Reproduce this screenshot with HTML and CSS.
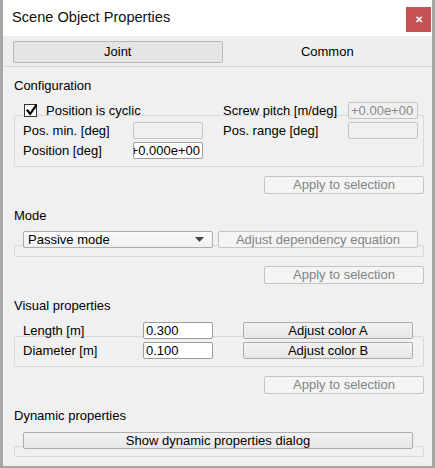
FILE: index.html
```html
<!DOCTYPE html>
<html>
<head>
<meta charset="utf-8">
<link rel="stylesheet" href="styles.css">
</head>
<body>
<div class="window">
  <div class="titlebar">
    <span class="title">Scene Object Properties</span>
    <span class="close">&#x2715;</span>
  </div>
  <div class="tabs">
    <div class="tab active">Joint</div>
    <div class="tab">Common</div>
  </div>
  <div class="content">
    <div class="sec-label first">Configuration</div>
    <div class="frame f-config">
      <div class="inner grid-config">
        <label class="check"><span class="box"><svg width="13" height="13" viewBox="0 0 13 13"><path d="M2.5 6.5 L5.2 10 L10.8 1.8" fill="none" stroke="#000" stroke-width="2.2" stroke-linecap="square"/></svg></span>Position is cyclic</label>
        <span class="lbl pad">Screw pitch [m/deg]</span>
        <span class="input dis">+0.00e+00</span>
        <span class="lbl">Pos. min. [deg]</span>
        <span class="input dis"></span>
        <span class="lbl pad">Pos. range [deg]</span>
        <span class="input dis"></span>
        <span class="lbl">Position [deg]</span>
        <span class="input en clip"><span>+0.000e+00</span></span>
      </div>
    </div>
    <div class="apply-row"><span class="btn dis apply">Apply to selection</span></div>

    <div class="sec-label">Mode</div>
    <div class="frame f-mode">
      <div class="inner row-mode">
        <span class="combo">Passive mode<svg class="arrow" width="9" height="5" viewBox="0 0 9 5"><path d="M0 0 H9 L4.5 5 Z" fill="#444"/></svg></span>
        <span class="btn dis wide">Adjust dependency equation</span>
      </div>
    </div>
    <div class="apply-row"><span class="btn dis apply">Apply to selection</span></div>

    <div class="sec-label">Visual properties</div>
    <div class="frame f-visual">
      <div class="inner grid-visual">
        <span class="lbl">Length [m]</span>
        <span class="input en">0.300</span>
        <span class="btn">Adjust color A</span>
        <span class="lbl">Diameter [m]</span>
        <span class="input en">0.100</span>
        <span class="btn">Adjust color B</span>
      </div>
    </div>
    <div class="apply-row"><span class="btn dis apply">Apply to selection</span></div>

    <div class="sec-label">Dynamic properties</div>
    <div class="frame f-dyn">
      <div class="inner row-dyn">
        <span class="btn full">Show dynamic properties dialog</span>
      </div>
    </div>
  </div>
</div>
</body>
</html>
```
FILE: styles.css
```css
* { box-sizing: border-box; }
html, body { margin: 0; padding: 0; }
body {
  width: 435px;
  height: 468px;
  overflow: hidden;
  background: #a9a7a3;
  font-family: "Liberation Sans", Arial, sans-serif;
  font-size: 13px;
  color: #000;
}
.window {
  margin-left: 3px;
  width: 429px;
  height: 466px;
  background: #f0f0f0;
}
.titlebar {
  height: 36px;
  background: #fff;
  display: flex;
  align-items: flex-start;
  justify-content: space-between;
}
.title {
  font-size: 14.6px;
  margin: 9px 0 0 9px;
  color: #111;
}
.close {
  width: 25px;
  height: 25px;
  margin: 7px 1px 0 0;
  background: #c75050;
  color: #fff;
  font-size: 10px;
  font-weight: bold;
  display: flex;
  align-items: center;
  justify-content: center;
}
.tabs {
  display: flex;
  padding: 5px 0 3px 10px;
  background: #eeeeee;
  border-bottom: 1px solid #d8d8d8;
}
.tab {
  flex: 1;
  height: 22px;
  line-height: 20px;
  text-align: center;
  border: 1px solid transparent;
}
.tab.active {
  background: #e5e5e5;
  border-color: #b9b9b9;
  border-radius: 2px;
}
.content {
  padding-left: 11px;
}
.sec-label {
  height: 16px;
  line-height: 16px;
  margin-top: 14px;
}
.sec-label.first { margin-top: 11px; }
.frame {
  width: 410px;
  border: 1px solid #d9d9d9;
  border-radius: 2px;
}
.inner { padding-left: 8px; }
.f-config { margin-top: 21px; padding-bottom: 7px; }
.f-config .inner { margin-top: -14px; }
.f-mode { margin-top: 21px; padding-bottom: 8px; }
.f-mode .inner { margin-top: -15px; }
.f-visual { margin-top: 22px; padding-bottom: 7px; }
.f-visual .inner { margin-top: -15px; }
.f-dyn { margin-top: 22px; padding-bottom: 7px; }
.f-dyn .inner { margin-top: -15px; }

.grid-config {
  display: grid;
  grid-template-columns: 110px 70px 145px 70px;
  row-gap: 3px;
}
.grid-config > .check { grid-column: 1 / span 2; }
.lbl {
  height: 17px;
  line-height: 17px;
  white-space: nowrap;
}
.lbl.pad { padding-left: 20px; }
.check {
  display: flex;
  align-items: center;
  height: 17px;
  white-space: nowrap;
}
.box {
  width: 13px;
  height: 13px;
  border: 1px solid #333;
  background: #fff;
  margin: 0 9px 0 1px;
}
.box svg { display: block; margin: -1px 0 0 0; }
.input {
  height: 17px;
  line-height: 15px;
  border: 1px solid #abadb3;
  border-radius: 2px;
  padding: 0 2px;
  white-space: nowrap;
  overflow: hidden;
}
.input.en { background: #fff; border-color: #9c9c9c; }
.input.dis { background: #f0f0f0; border-color: #c4c4c4; color: #8a8a8a; }
.input.clip { display: flex; justify-content: flex-end; padding: 0 2px 0 0; }
.btn {
  display: inline-block;
  height: 18px;
  line-height: 16px;
  text-align: center;
  border: 1px solid #acacac;
  border-radius: 2px;
  background: linear-gradient(#f2f2f2, #e6e6e6);
  white-space: nowrap;
}
.btn.dis {
  border-color: #c3c3c3;
  background: #f4f4f4;
  color: #838383;
}
.apply-row {
  width: 410px;
  display: flex;
  justify-content: flex-end;
  margin-top: 9px;
}
.apply { width: 160px; }
.row-mode {
  display: flex;
  gap: 5px;
}
.combo {
  width: 190px;
  height: 17px;
  line-height: 15px;
  border: 1px solid #acacac;
  border-radius: 2px;
  background: linear-gradient(#fbfbfb, #f0f0f0);
  padding: 0 4px;
  display: flex;
  align-items: center;
  justify-content: space-between;
}
.arrow { margin-right: 4px; }
.row-mode .wide { width: 200px; height: 17px; line-height: 15px; }
.grid-visual {
  display: grid;
  grid-template-columns: 120px 100px 170px;
  row-gap: 3px;
}
.grid-visual .btn, .grid-visual .input { height: 17px; line-height: 15px; }
.grid-visual .input { width: 70px; }
.row-dyn .full { width: 390px; height: 17px; line-height: 15px; }
```
